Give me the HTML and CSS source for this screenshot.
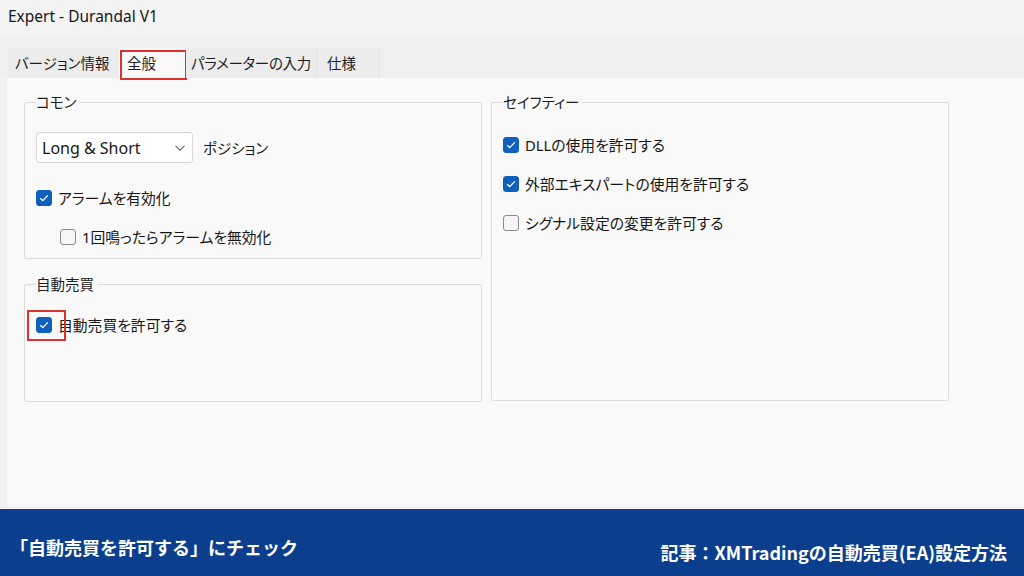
FILE: index.html
```html
<!DOCTYPE html>
<html lang="ja">
<head>
    <meta charset="UTF-8">
    <meta name="viewport" content="width=device-width, initial-scale=1.0">
    <title>Expert - Durandal V1</title>
    <link rel="stylesheet" href="styles.css">
</head>
<body>
    <div class="window">
        <div class="titlebar">Expert - Durandal V1</div>

        <div class="tabs">
            <div class="tab tab-info">バージョン情報</div>
            <div class="tab tab-general active">全般<span class="mark mark-tab"></span></div>
            <div class="tab tab-params">パラメーターの入力</div>
            <div class="tab tab-spec">仕様</div>
        </div>

        <div class="panel">
            <div class="column">
                <fieldset class="group group-common">
                    <legend>コモン</legend>
                    <div class="row-select">
                        <div class="select">
                            <span>Long &amp; Short</span>
                            <svg class="chevron" width="12" height="8" viewBox="0 0 12 8"><path d="M1.5 1.8 L6 6.2 L10.5 1.8" fill="none" stroke="#666" stroke-width="1.1"/></svg>
                        </div>
                        <span class="select-label">ポジション</span>
                    </div>
                    <label class="check first">
                        <span class="box checked"><svg width="10" height="8" viewBox="0 0 10 8"><path d="M1.2 4.2 L3.8 6.6 L8.8 1.4" fill="none" stroke="#fff" stroke-width="1.3"/></svg></span>
                        アラームを有効化
                    </label>
                    <label class="check indent">
                        <span class="box"></span>
                        1回鳴ったらアラームを無効化
                    </label>
                </fieldset>

                <fieldset class="group group-auto">
                    <legend>自動売買</legend>
                    <label class="check first">
                        <span class="box checked"><svg width="10" height="8" viewBox="0 0 10 8"><path d="M1.2 4.2 L3.8 6.6 L8.8 1.4" fill="none" stroke="#fff" stroke-width="1.3"/></svg><span class="mark mark-check"></span></span>
                        自動売買を許可する
                    </label>
                </fieldset>
            </div>

            <div class="column">
                <fieldset class="group group-safety">
                    <legend>セイフティー</legend>
                    <label class="check first">
                        <span class="box checked"><svg width="10" height="8" viewBox="0 0 10 8"><path d="M1.2 4.2 L3.8 6.6 L8.8 1.4" fill="none" stroke="#fff" stroke-width="1.3"/></svg></span>
                        DLLの使用を許可する
                    </label>
                    <label class="check">
                        <span class="box checked"><svg width="10" height="8" viewBox="0 0 10 8"><path d="M1.2 4.2 L3.8 6.6 L8.8 1.4" fill="none" stroke="#fff" stroke-width="1.3"/></svg></span>
                        外部エキスパートの使用を許可する
                    </label>
                    <label class="check">
                        <span class="box"></span>
                        シグナル設定の変更を許可する
                    </label>
                </fieldset>
            </div>
        </div>
    </div>

    <div class="caption">
        <div class="caption-left">「自動売買を許可する」にチェック</div>
        <div class="caption-right">記事：XMTradingの自動売買(EA)設定方法</div>
    </div>
</body>
</html>
```

FILE: styles.css
```css
* {
    box-sizing: border-box;
}
html, body {
    margin: 0;
    padding: 0;
}
body {
    width: 1024px;
    height: 576px;
    overflow: hidden;
    font-family: "Noto Sans", "Noto Sans CJK JP", sans-serif;
    font-feature-settings: "palt";
    color: #161616;
    background: #f0f0f0;
}
.window {
    height: 509px;
    display: flex;
    flex-direction: column;
    background: #f1f1f1;
}
.titlebar {
    height: 36px;
    padding: 5px 0 0 8px;
    font-size: 15.5px;
    line-height: 22px;
    background: #f3f3f3;
}

/* tabs */
.tabs {
    display: flex;
    height: 42px;
    padding: 12px 0 0 8px;
    background: #efefef;
}
.tab {
    position: relative;
    height: 30px;
    padding: 4px 0 0 7px;
    font-size: 14.5px;
    line-height: 22px;
    white-space: nowrap;
    color: #1e1e1e;
    background: #ececec;
    border-right: 1px solid #e2e2e2;
}
.tab-info { width: 110px; }
.tab-general { width: 68px; padding-left: 9px; }
.tab-params { width: 131px; padding-left: 5px; letter-spacing: -0.3px; }
.tab-spec { width: 63px; padding-left: 10px; }
.tab.active {
    background: #f9f9f9;
}
.mark {
    position: absolute;
    border: 2px solid #d9322f;
}
.mark-tab {
    left: 2px;
    top: 2px;
    width: 67px;
    height: 30px;
}

/* panel */
.panel {
    flex: 1;
    display: flex;
    gap: 9px;
    margin: 0 0 3px 7px;
    padding: 15px 0 0 17px;
    background: #f9f9f9;
}
.column {
    width: 458px;
    display: flex;
    flex-direction: column;
    gap: 16px;
}
.group {
    margin: 0;
    padding: 0 11px;
    border: 1px solid #dcdcdc;
    border-radius: 2px;
}
.group legend {
    margin-left: 0;
    padding: 0 3px 0 0;
    font-size: 14.5px;
    line-height: 18px;
    color: #1e1e1e;
}
.group-common { height: 166px; }
.group-auto { height: 127px; }
.group-safety { height: 308px; }

.row-select {
    display: flex;
    align-items: center;
    gap: 10px;
    margin-top: 21px;
}
.select {
    width: 157px;
    height: 31px;
    display: flex;
    align-items: center;
    justify-content: space-between;
    padding: 0 6px 0 5px;
    font-size: 16px;
    background: #fff;
    border: 1px solid #d6d6d6;
    border-radius: 3px;
}
.select-label {
    font-size: 14.5px;
}

.check {
    display: flex;
    align-items: center;
    gap: 6px;
    height: 20px;
    margin-top: 19px;
    font-size: 14.8px;
    line-height: 20px;
}
.group-common .check.first { margin-top: 25px; }
.group-auto .check.first { margin-top: 22px; }
.group-safety .check.first { margin-top: 24px; }
.indent {
    margin-left: 24px;
}
.box {
    position: relative;
    width: 16px;
    height: 16px;
    flex: none;
    display: flex;
    align-items: center;
    justify-content: center;
    border: 1px solid #8a8a8a;
    border-radius: 3px;
    background: #f6f6f6;
}
.box.checked {
    border-color: #0f5fbf;
    background: #0f5fbf;
}
.mark-check {
    left: -10px;
    top: -8px;
    width: 39px;
    height: 31px;
}

/* caption bar */
.caption {
    height: 67px;
    display: flex;
    justify-content: space-between;
    padding: 25px 17px 0 10px;
    background: #0b3f8d;
    color: #fff;
    font-family: "Noto Sans CJK JP", sans-serif;
    font-feature-settings: normal;
    font-weight: 700;
    font-size: 18px;
    line-height: 26px;
}
.caption-right {
    margin-top: 5px;
}
```
